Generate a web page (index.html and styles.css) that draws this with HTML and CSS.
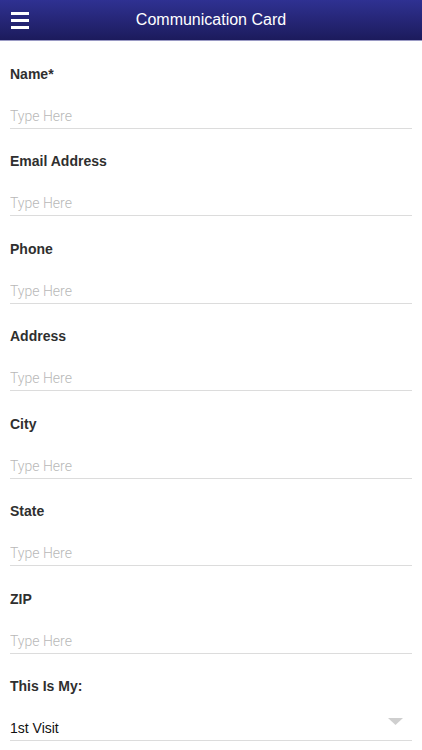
FILE: index.html
```html
<!DOCTYPE html>
<html lang="en">
<head>
    <meta charset="UTF-8">
    <meta name="viewport" content="width=device-width, initial-scale=1.0">
    <title>Communication Card</title>
    <link rel="stylesheet" href="styles.css">
</head>
<body>
    <header class="top-bar">
        <button class="menu-btn" aria-label="Menu">
            <span></span><span></span><span></span>
        </button>
        <h1>Communication Card</h1>
    </header>

    <form class="card-form">
        <div class="field">
            <label for="name">Name*</label>
            <input type="text" id="name" placeholder="Type Here">
        </div>
        <div class="field">
            <label for="email">Email Address</label>
            <input type="email" id="email" placeholder="Type Here">
        </div>
        <div class="field">
            <label for="phone">Phone</label>
            <input type="tel" id="phone" placeholder="Type Here">
        </div>
        <div class="field">
            <label for="address">Address</label>
            <input type="text" id="address" placeholder="Type Here">
        </div>
        <div class="field">
            <label for="city">City</label>
            <input type="text" id="city" placeholder="Type Here">
        </div>
        <div class="field">
            <label for="state">State</label>
            <input type="text" id="state" placeholder="Type Here">
        </div>
        <div class="field">
            <label for="zip">ZIP</label>
            <input type="text" id="zip" placeholder="Type Here">
        </div>
        <div class="field">
            <label for="visit">This Is My:</label>
            <div class="select-wrap">
                <select id="visit">
                    <option>1st Visit</option>
                    <option>2nd Visit</option>
                    <option>Regular Attendance</option>
                </select>
                <svg class="caret" width="15" height="7" viewBox="0 0 15 7"><path d="M0 0h15L7.5 7z" fill="#cfcfcf"/></svg>
            </div>
        </div>
    </form>
</body>
</html>
```

FILE: styles.css
```css
body {
    font-family: "Liberation Sans", Arial, sans-serif;
    background-color: #fff;
    color: #333;
    margin: 0;
    padding: 0;
}
.top-bar {
    display: flex;
    align-items: center;
    height: 40px;
    background: linear-gradient(#2f3192, #1c1b5c);
    border-bottom: 1px solid #9a9ac4;
    color: #fff;
}
.top-bar h1 {
    flex: 1;
    margin: 0 33px 0 0;
    font-size: 16px;
    font-weight: normal;
    text-align: center;
}
.menu-btn {
    display: flex;
    flex-direction: column;
    gap: 4px;
    width: 18px;
    margin: 0 4px 0 11px;
    padding: 0;
    border: none;
    background: none;
    cursor: pointer;
}
.menu-btn span {
    display: block;
    height: 3px;
    background-color: #fff;
}
.card-form {
    padding: 0 10px;
}
.field {
    padding-top: 22.5px;
}
.field label {
    display: block;
    font-size: 14px;
    font-weight: bold;
    line-height: 20px;
    color: #2f2f2f;
    margin-bottom: 20px;
}
.field input,
.select-wrap {
    display: block;
    width: 100%;
    box-sizing: border-box;
    height: 25px;
    padding: 0;
    border: none;
    border-bottom: 1px solid #dcdcdc;
    font-family: inherit;
    font-size: 14px;
    color: #111;
    outline: none;
}
.field input::placeholder {
    font-family: Roboto, "Liberation Sans", sans-serif;
    font-weight: 300;
    font-size: 14px;
    color: #b8b8b8;
}
.select-wrap {
    display: flex;
    align-items: flex-start;
}
.select-wrap select {
    flex: 1;
    height: 24px;
    padding: 0;
    border: none;
    background: none;
    font-family: inherit;
    font-size: 14px;
    color: #111;
    appearance: none;
    -webkit-appearance: none;
    outline: none;
}
.caret {
    margin: 2px 9px 0 0;
}
```
